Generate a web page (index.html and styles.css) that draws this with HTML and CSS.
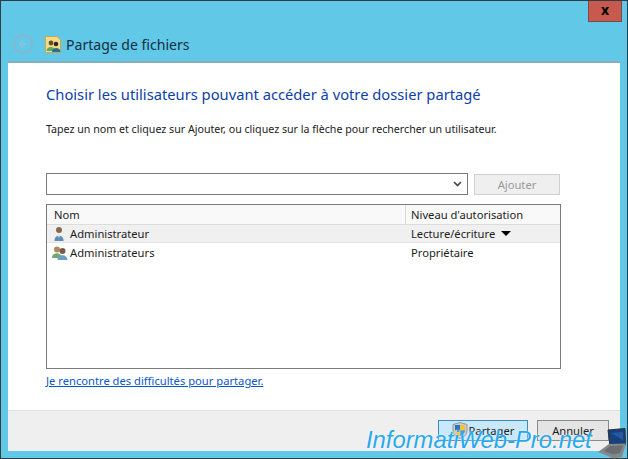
FILE: index.html
```html
<!DOCTYPE html>
<html lang="fr">
<head>
    <meta charset="UTF-8">
    <title>Partage de fichiers</title>
    <link rel="stylesheet" href="styles.css">
</head>
<body>
    <div class="window">
        <div class="titlebar">
            <div class="close-row">
                <div class="close-button">x</div>
            </div>
            <div class="nav-row">
                <div class="back-button">
                    <svg width="10" height="10" viewBox="0 0 14 14"><path d="M7 2 L2 7 L7 12 M2 7 H12" fill="none" stroke="#8fc3d8" stroke-width="2"/></svg>
                </div>
                <svg class="title-icon" width="16" height="17" viewBox="0 0 16 17">
                    <path d="M0.5 0.5 H12 L15.5 4 V16.5 H0.5 Z" fill="#f3dc86" stroke="#c9a94a"/>
                    <circle cx="6" cy="7" r="2.4" fill="#6b4a30"/>
                    <path d="M1.5 15 C1.5 9.5 10 9.5 10 15 Z" fill="#5da86b"/>
                    <circle cx="11" cy="8" r="2.3" fill="#2f2a26"/>
                    <path d="M7 16 C7 10.5 15.5 10.5 15.5 16 Z" fill="#2f6f8c"/>
                </svg>
                <span class="window-title">Partage de fichiers</span>
            </div>
        </div>

        <div class="content">
            <div class="main">
                <h1>Choisir les utilisateurs pouvant accéder à votre dossier partagé</h1>
                <p class="hint">Tapez un nom et cliquez sur Ajouter, ou cliquez sur la flèche pour rechercher un utilisateur.</p>

                <div class="add-row">
                    <div class="combo">
                        <svg width="9" height="6" viewBox="0 0 9 6"><path d="M1 1 L4.5 4.5 L8 1" fill="none" stroke="#444" stroke-width="1.6"/></svg>
                    </div>
                    <div class="btn btn-disabled">Ajouter</div>
                </div>

                <div class="list">
                    <div class="list-head">
                        <div class="col-name">Nom</div>
                        <div class="col-level">Niveau d'autorisation</div>
                    </div>
                    <div class="list-row selected">
                        <div class="col-name">
                            <svg class="user-icon" width="16" height="16" viewBox="0 0 16 16">
                                <circle cx="7" cy="4" r="3" fill="#8a6748"/>
                                <path d="M2.5 15 C2 8 12 8 11.5 15 Z" fill="#5f8fb5"/>
                                <path d="M5.5 8.5 H8.5 L7 12 Z" fill="#dfe6ea"/>
                            </svg>
                            Administrateur
                        </div>
                        <div class="col-level">Lecture/écriture <span class="arrow"></span></div>
                    </div>
                    <div class="list-row">
                        <div class="col-name">
                            <svg class="user-icon" width="16" height="16" viewBox="0 0 16 16">
                                <circle cx="5" cy="4.5" r="3" fill="#b08a5a"/>
                                <path d="M0 13 C0 6.5 9.5 6.5 9.5 13 Z" fill="#6aac6c"/>
                                <circle cx="10.5" cy="6" r="3" fill="#7a5c42"/>
                                <path d="M5.5 15 C5.5 8.5 15.5 8.5 15.5 15 Z" fill="#6d9fc6"/>
                            </svg>
                            Administrateurs
                        </div>
                        <div class="col-level">Propriétaire</div>
                    </div>
                </div>

                <a class="help-link" href="#">Je rencontre des difficultés pour partager.</a>
            </div>

            <div class="footer">
                <div class="btn btn-default">
                    <svg class="shield" width="16" height="17" viewBox="0 0 16 17">
                        <path d="M8 0.5 L15 2.5 V9 C15 13 11 15.5 8 16.5 C5 15.5 1 13 1 9 V2.5 Z" fill="#c9cdd2" stroke="#7d8794" stroke-width="0.8"/>
                        <path d="M8 3 H3 V8.5 H8 Z" fill="#2f6fc4"/>
                        <path d="M8 3 H13 V8.5 H8 Z" fill="#f0c52e"/>
                        <path d="M8 8.5 H3 C3.5 11.5 5.5 13 8 14 Z" fill="#f0c52e"/>
                        <path d="M8 8.5 H13 C12.5 11.5 10.5 13 8 14 Z" fill="#2f6fc4"/>
                    </svg>
                    Partager
                </div>
                <div class="btn">Annuler</div>
            </div>
        </div>

        <div class="watermark">InformatiWeb-Pro.net</div>
        <svg class="laptop" width="32" height="31" viewBox="0 0 32 31">
            <path d="M11 2 L28 0.5 L28.5 17 L13 18 Z" fill="#16407e" stroke="#2b2f36" stroke-width="1"/>
            <path d="M14 5 L26 4 L26 12 Z" fill="#2f6cb8" opacity="0.6"/>
            <path d="M1 24 L12 16 L29 15.5 L25 29 L17 30.5 Z" fill="#85888a"/>
            <path d="M7 23 L13 18 L26 17.5 L23 25 L16 26.5 Z" fill="#6a6d70"/>
        </svg>
    </div>
</body>
</html>
```

FILE: styles.css
```css
* {
    margin: 0;
    padding: 0;
    box-sizing: border-box;
}

body {
    font-family: "Noto Sans", "Open Sans", sans-serif;
    font-size: 11.2px;
    color: #1c1c1c;
    background-color: #62c8e8;
    overflow: hidden;
}

.window {
    position: relative;
    width: 628px;
    height: 459px;
    display: flex;
    flex-direction: column;
    background-color: #62c8e8;
    border: 1px solid #2f3d45;
}

.titlebar {
    height: 62px;
    display: flex;
    flex-direction: column;
    border-bottom: 2px solid #86aec0;
    margin: 0 7px;
    flex-shrink: 0;
}

.close-row {
    display: flex;
    justify-content: flex-end;
    height: 21px;
}

.close-button {
    width: 34px;
    height: 21px;
    margin-right: -2px;
    background-color: #c75a4e;
    border: 1px solid #7a4a48;
    border-top: none;
    color: #000;
    font-weight: 700;
    font-size: 14px;
    line-height: 18px;
    text-align: center;
}

.nav-row {
    display: flex;
    align-items: center;
    margin-top: 12px;
    padding-left: 5px;
}

.back-button {
    width: 20px;
    height: 20px;
    border: 2px solid #86b6cb;
    border-radius: 50%;
    display: flex;
    align-items: center;
    justify-content: center;
    margin-right: 12px;
}

.title-icon {
    margin-right: 5px;
}

.window-title {
    font-size: 14.05px;
    color: #13303f;
}

.content {
    flex: 1;
    margin: 0 7px 7px;
    background-color: #fff;
    display: flex;
    flex-direction: column;
}

.main {
    flex: 1;
    padding: 21px 60px 0 38px;
}

h1 {
    font-weight: 400;
    font-size: 14.72px;
    line-height: 20px;
    color: #0d3fa8;
    white-space: nowrap;
}

.hint {
    margin-top: 17px;
    line-height: 16px;
    font-size: 10.67px;
    white-space: nowrap;
}

.add-row {
    display: flex;
    justify-content: space-between;
    margin-top: 36px;
}

.combo {
    width: 422px;
    height: 22px;
    border: 1px solid #7a7a7a;
    display: flex;
    align-items: center;
    justify-content: flex-end;
    padding-right: 5px;
}

.btn {
    display: flex;
    align-items: center;
    justify-content: center;
    width: 72px;
    height: 21px;
    border: 1px solid #8a8a8a;
    background-color: #e4e4e4;
}

.btn-disabled {
    width: 86px;
    margin-top: 1px;
    border-color: #cfcfcf;
    background-color: #efefef;
    color: #9a9a9a;
}

.list {
    margin-top: 9px;
    width: 515px;
    height: 165px;
    border: 1px solid #7a7a7a;
}

.list-head,
.list-row {
    display: flex;
    height: 19px;
    align-items: center;
    line-height: 19px;
}

.list-head {
    background-color: #f9f9f9;
}

.list-head .col-level {
    border-left: 1px solid #d8d8d8;
}

.list-row.selected {
    background-color: #f0f0f0;
    border-top: 1px solid #dcdcdc;
    border-bottom: 1px solid #e4e4e4;
}

.col-name {
    width: 358px;
    padding-left: 7px;
    display: flex;
    align-items: center;
    height: 100%;
}

.list-row .col-name {
    padding-left: 5px;
}

.col-level {
    flex: 1;
    padding-left: 5px;
    height: 100%;
    display: flex;
    align-items: center;
}

.list-row .col-level {
    padding-left: 6px;
}

.user-icon {
    margin-right: 2px;
    flex-shrink: 0;
}

.arrow {
    width: 0;
    height: 0;
    margin-left: 6px;
    border-left: 5px solid transparent;
    border-right: 5px solid transparent;
    border-top: 5px solid #000;
}

.help-link {
    display: block;
    margin-top: 4px;
    color: #0a57c9;
    line-height: 16px;
}

.footer {
    height: 41px;
    background-color: #efefef;
    border-top: 1px solid #e2e2e2;
    display: flex;
    justify-content: flex-end;
    align-items: flex-start;
    gap: 9px;
    padding: 9px 11px 0 0;
}

.btn-default {
    width: 90px;
    background-color: #c9e9fb;
    border-color: #3a8cc0;
}

.shield {
    margin-right: 1px;
}

.watermark {
    position: absolute;
    left: 365px;
    top: 425px;
    font-family: "Liberation Sans", sans-serif;
    font-style: italic;
    font-size: 23.8px;
    line-height: 28px;
    color: #27a9ee;
    white-space: nowrap;
    text-shadow: 0 0 2px #fff;
}

.laptop {
    position: absolute;
    left: 596px;
    top: 427px;
}
```
